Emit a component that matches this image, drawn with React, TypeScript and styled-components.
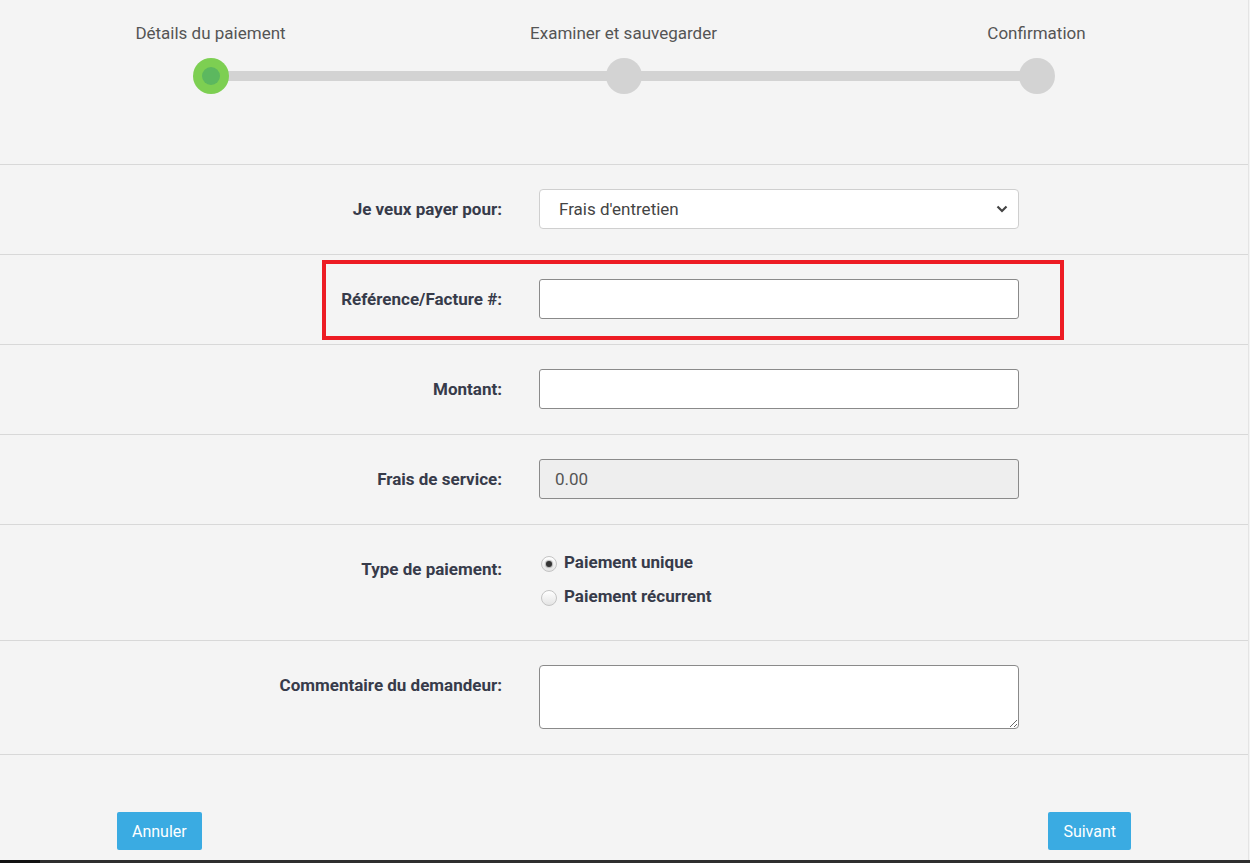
import styled, { createGlobalStyle } from 'styled-components';

const GlobalStyle = createGlobalStyle`
  html, body {
    margin: 0;
    padding: 0;
    background: #f4f4f4;
    font-family: Roboto, "Liberation Sans", Arial, sans-serif;
  }
  * { box-sizing: border-box; }
`;

const Page = styled.div`
  width: 1249px;
  min-height: 860px;
  border-right: 1px solid #e4e4e4;
  display: flex;
  flex-direction: column;
`;

const Stepper = styled.div`
  display: grid;
  grid-template-columns: repeat(3, 413px);
  padding: 0 4px;
  height: 164px;
`;

const Step = styled.div`
  display: flex;
  flex-direction: column;
  align-items: center;
  padding-top: 24px;
`;

const StepLabel = styled.div`
  font-size: 17px;
  line-height: 19px;
  color: #555;
  white-space: nowrap;
`;

const DotRow = styled.div<{ $first?: boolean; $last?: boolean }>`
  position: relative;
  width: 100%;
  height: 36px;
  margin-top: 15px;
  display: flex;
  justify-content: center;

  &::before, &::after {
    content: '';
    position: absolute;
    top: 13px;
    height: 10px;
    width: 50%;
    background: #d3d3d3;
  }
  &::before {
    left: 0;
    display: ${p => (p.$first ? 'none' : 'block')};
  }
  &::after {
    left: 50%;
    display: ${p => (p.$last ? 'none' : 'block')};
  }
`;

const Dot = styled.div<{ $active?: boolean }>`
  position: relative;
  z-index: 1;
  width: 36px;
  height: 36px;
  border-radius: 50%;
  background: ${p => (p.$active ? '#7dcf52' : '#d3d3d3')};
  display: flex;
  align-items: center;
  justify-content: center;

  &::after {
    content: '';
    display: ${p => (p.$active ? 'block' : 'none')};
    width: 18px;
    height: 18px;
    border-radius: 50%;
    background: #5cb85f;
  }
`;

const Form = styled.div`
  display: flex;
  flex-direction: column;
`;

const Row = styled.div<{ $last?: boolean }>`
  position: relative;
  display: grid;
  grid-template-columns: 502px 480px;
  column-gap: 37px;
  align-items: start;
  padding: 24px 0 25px;
  border-top: 1px solid #d8d8d8;
  border-bottom: ${p => (p.$last ? '1px solid #d8d8d8' : 'none')};
`;

const Label = styled.div`
  text-align: right;
  font-size: 17px;
  font-weight: 700;
  line-height: 40px;
  color: #373b4a;
  white-space: nowrap;
`;

const Highlight = styled.div`
  position: absolute;
  left: 322px;
  width: 742px;
  top: 5px;
  bottom: 4px;
  border: 4px solid #ed1c24;
  pointer-events: none;
`;

const SelectBox = styled.div`
  position: relative;
  height: 40px;
  border: 1px solid #cfcfcf;
  border-radius: 4px;
  background: #fff;
  display: flex;
  align-items: center;
  justify-content: space-between;
  padding: 0 10px 0 19px;
  font-size: 17px;
  color: #444;
`;

const TextInput = styled.input<{ $disabled?: boolean }>`
  height: 40px;
  width: 480px;
  border: 1px solid #8a8a8a;
  border-radius: 3px;
  background: ${p => (p.$disabled ? '#eeeeee' : '#fff')};
  padding: 0 15px;
  font-family: inherit;
  font-size: 17px;
  color: #555;
  outline: none;
`;

const TextArea = styled.textarea`
  width: 480px;
  height: 64px;
  border: 1px solid #8a8a8a;
  border-radius: 4px;
  background: #fff;
  font-family: inherit;
  font-size: 17px;
  outline: none;
  resize: vertical;
  display: block;
`;

const RadioGroup = styled.div`
  display: flex;
  flex-direction: column;
  gap: 8px;
  padding-bottom: 6px;
`;

const RadioLine = styled.label`
  display: flex;
  align-items: center;
  height: 26px;
  gap: 7px;
  font-size: 17px;
  font-weight: 700;
  color: #373b4a;
  padding-left: 2px;
  white-space: nowrap;
`;

const Radio = styled.span<{ $checked?: boolean }>`
  width: 16px;
  height: 16px;
  border-radius: 50%;
  border: 1px solid #c4c4c4;
  background: linear-gradient(#ffffff, #e4e4e4);
  display: flex;
  align-items: center;
  justify-content: center;
  margin-top: 3px;

  &::after {
    content: '';
    display: ${p => (p.$checked ? 'block' : 'none')};
    width: 6px;
    height: 6px;
    border-radius: 50%;
    background: #333;
    box-shadow: 0 0 1px 1px rgba(0, 0, 0, 0.25);
  }
`;

const Footer = styled.div`
  display: flex;
  justify-content: space-between;
  padding: 57px 117px 10px;
`;

const Button = styled.button`
  height: 38px;
  padding: 0 15px;
  border: none;
  border-radius: 2px;
  background: #3aabe2;
  color: #fff;
  font-family: inherit;
  font-size: 16px;
  cursor: pointer;
`;

const TaskStrip = styled.div`
  height: 3px;
  background: linear-gradient(90deg, #111 0 40px, #2e2e2e 40px);
`;

const Chevron = () => (
  <svg width="12" height="8" viewBox="0 0 12 8">
    <path d="M1.5 1.5 L6 6 L10.5 1.5" fill="none" stroke="#444" strokeWidth="2.2" />
  </svg>
);

const steps = ['Détails du paiement', 'Examiner et sauvegarder', 'Confirmation'];

export default function App() {
  return (
    <>
      <GlobalStyle />
      <Page>
        <Stepper>
          {steps.map((s, i) => (
            <Step key={s}>
              <StepLabel>{s}</StepLabel>
              <DotRow $first={i === 0} $last={i === steps.length - 1}>
                <Dot $active={i === 0} />
              </DotRow>
            </Step>
          ))}
        </Stepper>

        <Form>
          <Row>
            <Label>Je veux payer pour:</Label>
            <SelectBox>
              <span>Frais d'entretien</span>
              <Chevron />
            </SelectBox>
          </Row>
          <Row>
            <Highlight />
            <Label>Référence/Facture #:</Label>
            <TextInput />
          </Row>
          <Row>
            <Label>Montant:</Label>
            <TextInput />
          </Row>
          <Row>
            <Label>Frais de service:</Label>
            <TextInput $disabled readOnly value="0.00" />
          </Row>
          <Row>
            <Label>Type de paiement:</Label>
            <RadioGroup>
              <RadioLine>
                <Radio $checked />
                Paiement unique
              </RadioLine>
              <RadioLine>
                <Radio />
                Paiement récurrent
              </RadioLine>
            </RadioGroup>
          </Row>
          <Row $last>
            <Label>Commentaire du demandeur:</Label>
            <TextArea />
          </Row>
        </Form>

        <Footer>
          <Button>Annuler</Button>
          <Button>Suivant</Button>
        </Footer>
      </Page>
      <TaskStrip />
    </>
  );
}
